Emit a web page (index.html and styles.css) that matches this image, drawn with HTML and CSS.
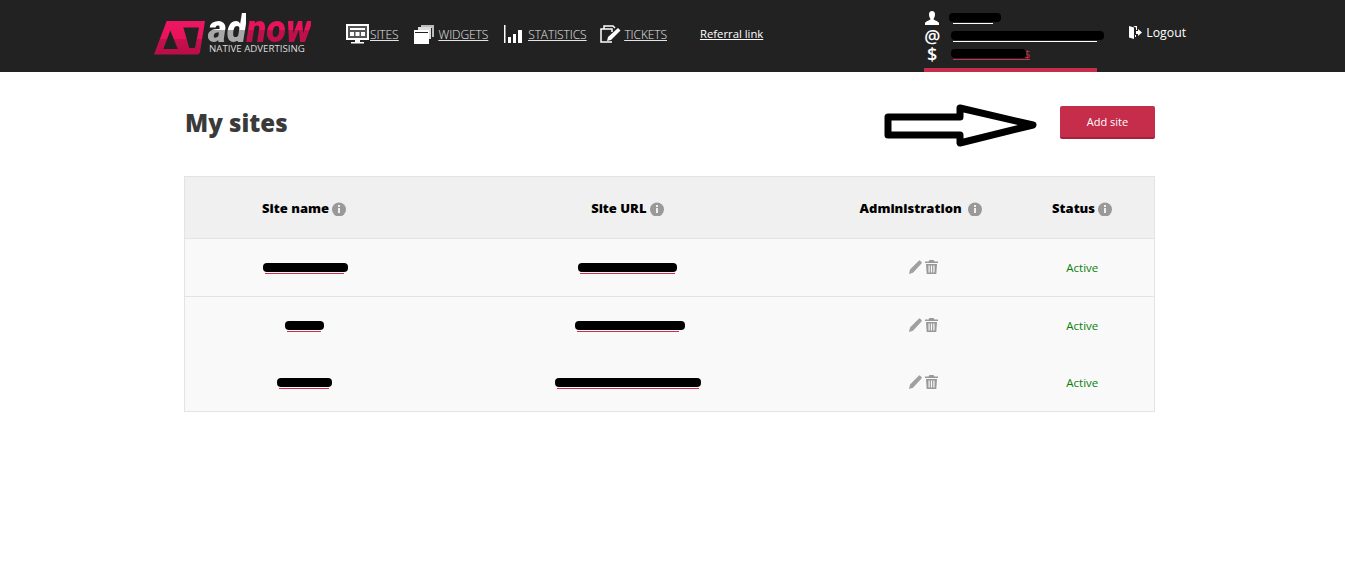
FILE: index.html
```html
<!DOCTYPE html>
<html lang="en">
<head>
  <meta charset="UTF-8" />
  <title>AdNow - My sites</title>
  <link rel="stylesheet" href="styles.css">
</head>
<body>
  <header class="topbar">
    <a class="logo" href="#">
      <svg class="logo-mark" width="52" height="36" viewBox="0 0 52 36">
        <defs>
          <linearGradient id="pink" x1="0" y1="0" x2="0" y2="1">
            <stop offset="0" stop-color="#ee1662"/>
            <stop offset="0.54" stop-color="#e8135c"/>
            <stop offset="0.55" stop-color="#c8104f"/>
            <stop offset="1" stop-color="#b80e48"/>
          </linearGradient>
        </defs>
        <path fill="url(#pink)" fill-rule="evenodd" d="M0 34.500 L12.700 1 H51 L46 32 Q45.500 34.500 43 34.500 Z M16.300 10.500 L9.300 29 H23.800 Z M29.300 7.500 L35.300 28 H40 Q41 28 41.300 26.500 L45 7.500 Z"/>
      </svg>
      <span class="logo-text">
        <span class="logo-name"><span class="logo-ad">ad</span><span class="logo-now">now</span></span>
        <span class="logo-tag">NATIVE ADVERTISING</span>
      </span>
    </a>

    <nav class="nav">
      <a class="nav-link" href="#">
        <svg width="23" height="20" viewBox="0 0 23 20">
          <rect x="1" y="1" width="21" height="14" fill="#555" stroke="#fff" stroke-width="2"/>
          <path fill="#fff" d="M4 4h15v2H4zM4 8h4v4H4zM9.500 8h4v4h-4zM15 8h4v4h-4zM9 16h5v2h4v1.500H5V18h4z"/>
        </svg>
        <span>SITES</span>
      </a>
      <a class="nav-link" href="#">
        <svg width="21" height="19" viewBox="0 0 21 19">
          <path fill="#bbb" d="M7 0h13v12h-2V3H7z"/>
          <path fill="#ddd" d="M4 2h13v12h-2V5H4z"/>
          <path fill="#fff" d="M0 5h15v14H0zM1 7v1h13V7z"/>
        </svg>
        <span>WIDGETS</span>
      </a>
      <a class="nav-link" href="#">
        <svg width="20" height="18" viewBox="0 0 20 18">
          <path fill="#fff" d="M0 0h1.500v18H0zM4 12h3v6H4zM9 9h3v9H9zM14 5h4v13h-4z"/>
        </svg>
        <span>STATISTICS</span>
      </a>
      <a class="nav-link" href="#">
        <svg width="21" height="19" viewBox="0 0 21 19">
          <path fill="none" stroke="#fff" stroke-width="1.500" d="M4 4V1h9l2 2M12 17H1V4h11v3"/>
          <path fill="#fff" d="M7 16l1-4L18 3l2.500 2.500L11 15z"/>
        </svg>
        <span>TICKETS</span>
      </a>
      <a class="referral" href="#">Referral link</a>
    </nav>

    <div class="account">
      <div class="account-row">
        <svg class="account-icon" width="16" height="14" viewBox="0 0 16 14">
          <path fill="#fff" d="M5 3.500a3 3.500 0 0 1 6 0c0 2-1 3.500-1.500 4.500 0 1 4.500 2 5.500 4v2H1v-2c1-2 5.500-3 5.500-4C6 7 5 5.500 5 3.500z"/>
        </svg>
        <span class="redact redact-user"></span>
      </div>
      <div class="account-row">
        <span class="account-glyph">@</span>
        <span class="redact redact-mail"></span>
      </div>
      <div class="account-row">
        <span class="account-glyph">$</span>
        <span class="redact redact-balance">$</span>
      </div>
    </div>

    <a class="logout" href="#">
      <svg width="13" height="13" viewBox="0 0 13 13">
        <path fill="#fff" d="M0 0h8v4H7V1.500L4 0zM0 0l5 1.500V13L0 11.500zM6 9h1v2H6zM7 5h2V3l4 3.500L9 10V8H7z"/>
      </svg>
      <span>Logout</span>
    </a>
  </header>

  <main class="page">
    <div class="title-row">
      <h1>My sites</h1>
      <svg class="arrow" width="154" height="44" viewBox="0 0 154 44">
        <path fill="#fff" stroke="#000" stroke-width="7" stroke-linejoin="round" d="M4 13 H76 V4 L149 21 L76 39 V31 H4 Z"/>
      </svg>
      <button class="add-btn">Add site</button>
    </div>

    <table class="sites">
      <colgroup>
        <col class="col-name">
        <col class="col-url">
        <col class="col-admin">
        <col class="col-status">
      </colgroup>
      <thead>
        <tr>
          <th>Site name <svg class="info" width="14" height="14" viewBox="0 0 14 14"><use href="#i-info"/></svg></th>
          <th>Site URL <svg class="info" width="14" height="14" viewBox="0 0 14 14"><use href="#i-info"/></svg></th>
          <th>Administration &nbsp;<svg class="info" width="14" height="14" viewBox="0 0 14 14"><use href="#i-info"/></svg></th>
          <th>Status <svg class="info" width="14" height="14" viewBox="0 0 14 14"><use href="#i-info"/></svg></th>
        </tr>
      </thead>
      <tbody>
        <tr class="line">
          <td class="link-cell"><a class="redact redact-n1" href="#"></a></td>
          <td class="link-cell"><a class="redact redact-u1" href="#"></a></td>
          <td class="tools">
            <svg width="13" height="14" viewBox="0 0 13 14"><use href="#i-pencil"/></svg>
            <svg width="13" height="14" viewBox="0 0 13 14"><use href="#i-trash"/></svg>
          </td>
          <td class="active">Active</td>
        </tr>
        <tr>
          <td class="link-cell"><a class="redact redact-n2" href="#"></a></td>
          <td class="link-cell"><a class="redact redact-u2" href="#"></a></td>
          <td class="tools">
            <svg width="13" height="14" viewBox="0 0 13 14"><use href="#i-pencil"/></svg>
            <svg width="13" height="14" viewBox="0 0 13 14"><use href="#i-trash"/></svg>
          </td>
          <td class="active">Active</td>
        </tr>
        <tr>
          <td class="link-cell"><a class="redact redact-n3" href="#"></a></td>
          <td class="link-cell"><a class="redact redact-u3" href="#"></a></td>
          <td class="tools">
            <svg width="13" height="14" viewBox="0 0 13 14"><use href="#i-pencil"/></svg>
            <svg width="13" height="14" viewBox="0 0 13 14"><use href="#i-trash"/></svg>
          </td>
          <td class="active">Active</td>
        </tr>
      </tbody>
    </table>
  </main>

  <svg class="sprites" width="0" height="0">
    <symbol id="i-info" viewBox="0 0 14 14">
      <circle cx="7" cy="7.500" r="7" fill="#999"/>
      <path fill="#f0f0f0" d="M6 3h2v2H6zM6 6h2v5H6z"/>
    </symbol>
    <symbol id="i-pencil" viewBox="0 0 13 14">
      <path fill="#a0a0a0" d="M0 14l1-4.500L9.800 .7a1 1 0 0 1 1.400 0l1.300 1.300a1 1 0 0 1 0 1.400L4 12.800z"/>
    </symbol>
    <symbol id="i-trash" viewBox="0 0 13 14">
      <path fill="#999" d="M4.500 0h4l1 1.500H13V3H0V1.500h3.500zM1 4h11l-.7 10H1.700zM3.500 5.500v7h1.200v-7zM5.900 5.500v7h1.200v-7zM8.300 5.500v7h1.200v-7z" fill-rule="evenodd"/>
    </symbol>
  </svg>
</body>
</html>
```

FILE: styles.css
```css
body {
  margin: 0;
  font-family: "Open Sans", sans-serif;
  font-size: 12px;
  color: #333;
  background: #fff;
}

a {
  color: inherit;
}

.topbar {
  display: flex;
  align-items: flex-start;
  height: 72px;
  padding-left: 154px;
  background: #222;
  color: #fff;
}

.logo {
  display: flex;
  gap: 2px;
  margin-top: 20px;
  text-decoration: none;
}

.logo-text {
  display: flex;
  flex-direction: column;
  width: 104px;
  margin-top: -5px;
}

.logo-name {
  display: block;
  width: 122px;
  font-family: Roboto, "Liberation Sans", sans-serif;
  font-size: 39px;
  font-weight: 900;
  font-style: italic;
  line-height: 28px;
  transform: scaleX(0.93);
  transform-origin: left;
}

.logo-ad {
  background: linear-gradient(#fff 52%, #a8a8a8 53%);
  -webkit-background-clip: text;
  background-clip: text;
  color: transparent;
}

.logo-now {
  background: linear-gradient(#e8135c 52%, #c0104c 53%);
  -webkit-background-clip: text;
  background-clip: text;
  color: transparent;
}

.logo-tag {
  margin-left: 1px;
  font-size: 9.700px;
  line-height: 11px;
  color: #ddd;
  white-space: nowrap;
}

.nav {
  display: flex;
  align-items: center;
  height: 20px;
  margin: 24px 0 0 34px;
}

.nav-link {
  display: flex;
  align-items: center;
  gap: 1px;
  margin-right: 15px;
  color: #e4e4e4;
  font-weight: 300;
  letter-spacing: -0.1px;
}

.nav-link:nth-child(2) {
  gap: 4px;
  margin-right: 16px;
}

.nav-link:nth-child(3) {
  gap: 4px;
  margin-right: 14px;
}

.nav-link:nth-child(4) {
  gap: 3px;
}

.nav-link svg {
  display: block;
  flex: none;
}

.nav-link span {
  text-decoration: underline;
}

.referral {
  margin: -2px 0 0 18px;
  font-size: 11.300px;
  color: #fff;
}

.account {
  width: 173px;
  height: 68px;
  margin-left: 161px;
  padding-top: 9px;
  box-sizing: border-box;
  box-shadow: 0 4px 0 #c52d4a;
}

.account-row {
  display: flex;
  align-items: center;
  height: 18px;
}

.account-icon {
  flex: none;
  width: 16px;
}

.account-glyph {
  width: 16px;
  flex: none;
  font-size: 18px;
  font-weight: 600;
  line-height: 18px;
  text-align: center;
}

.redact {
  display: inline-block;
  position: relative;
  height: 10px;
  border-bottom: 1px solid #d42a4e;
  vertical-align: top;
}

.redact::after {
  content: "";
  position: absolute;
  left: -2px;
  right: -2px;
  top: 0;
  height: 9px;
  border-radius: 4px;
  background: #000;
}

.redact-user {
  width: 40px;
  margin-left: 13px;
  border-color: #fff;
}

.redact-user::after {
  left: -4px;
  right: -8px;
}

.redact-mail {
  width: 144px;
  margin-left: 13px;
  border-color: #fff;
}

.redact-mail::after {
  right: -7px;
}

.redact-balance {
  width: 77px;
  margin-left: 13px;
  font-size: 10px;
  line-height: 10px;
  color: #c52d4a;
  text-align: right;
}

.redact-balance::after {
  right: 4px;
}

.logout {
  display: flex;
  align-items: center;
  gap: 4px;
  margin: 24px 0 0 32px;
  font-size: 12.300px;
  color: #fff;
  text-decoration: none;
}

.page {
  width: 971px;
  margin-left: 184px;
}

.title-row {
  display: flex;
  align-items: flex-start;
  height: 71px;
  padding-top: 33px;
}

h1 {
  margin: 0 auto 0 1px;
  font-size: 24px;
  font-weight: 800;
  line-height: 36px;
  color: #3a3a3a;
}

.arrow {
  display: block;
  margin: -1px 22px 0 0;
}

.add-btn {
  width: 95px;
  height: 33px;
  margin-top: 1px;
  padding: 0;
  border: none;
  border-bottom: 2px solid #a3213b;
  border-radius: 2px;
  background: #c52d4a;
  color: #fff;
  font-family: inherit;
  font-size: 11px;
  cursor: pointer;
}

.sites {
  width: 970px;
  border: 1px solid #e3e3e3;
  border-collapse: collapse;
  table-layout: fixed;
  background: #f9f9f9;
}

.col-name { width: 239px; }
.col-url { width: 408px; }
.col-admin { width: 179px; }
.col-status { width: 144px; }

th {
  height: 61px;
  padding: 0;
  background: #f0f0f0;
  border-bottom: 1px solid #e3e3e3;
  color: #000;
  font-size: 13px;
  font-weight: 800;
}

td {
  height: 57px;
  padding: 0;
  text-align: center;
}

.line td {
  border-bottom: 1px solid #e3e3e3;
}

.link-cell {
  height: 55px;
  padding-top: 2px;
  line-height: 11px;
}

.info {
  vertical-align: -3px;
}

.tools {
  padding: 0 0 3px 5px;
  height: 54px;
}

.tools svg {
  vertical-align: middle;
}

.active {
  color: #0a800a;
  font-size: 11.500px;
}

.redact-n1 { width: 79px; }
.redact-n1::after { left: -2px; right: -4px; }
.redact-u1 { width: 95px; }
.redact-n2 { width: 34px; }
.redact-n2::after { right: -3px; }
.redact-u2 { width: 102px; }
.redact-u2::after { left: -2px; right: -6px; }
.redact-n3 { width: 50px; }
.redact-n3::after { right: -3px; }
.redact-u3 { width: 142px; }

.sprites {
  position: absolute;
}
```
